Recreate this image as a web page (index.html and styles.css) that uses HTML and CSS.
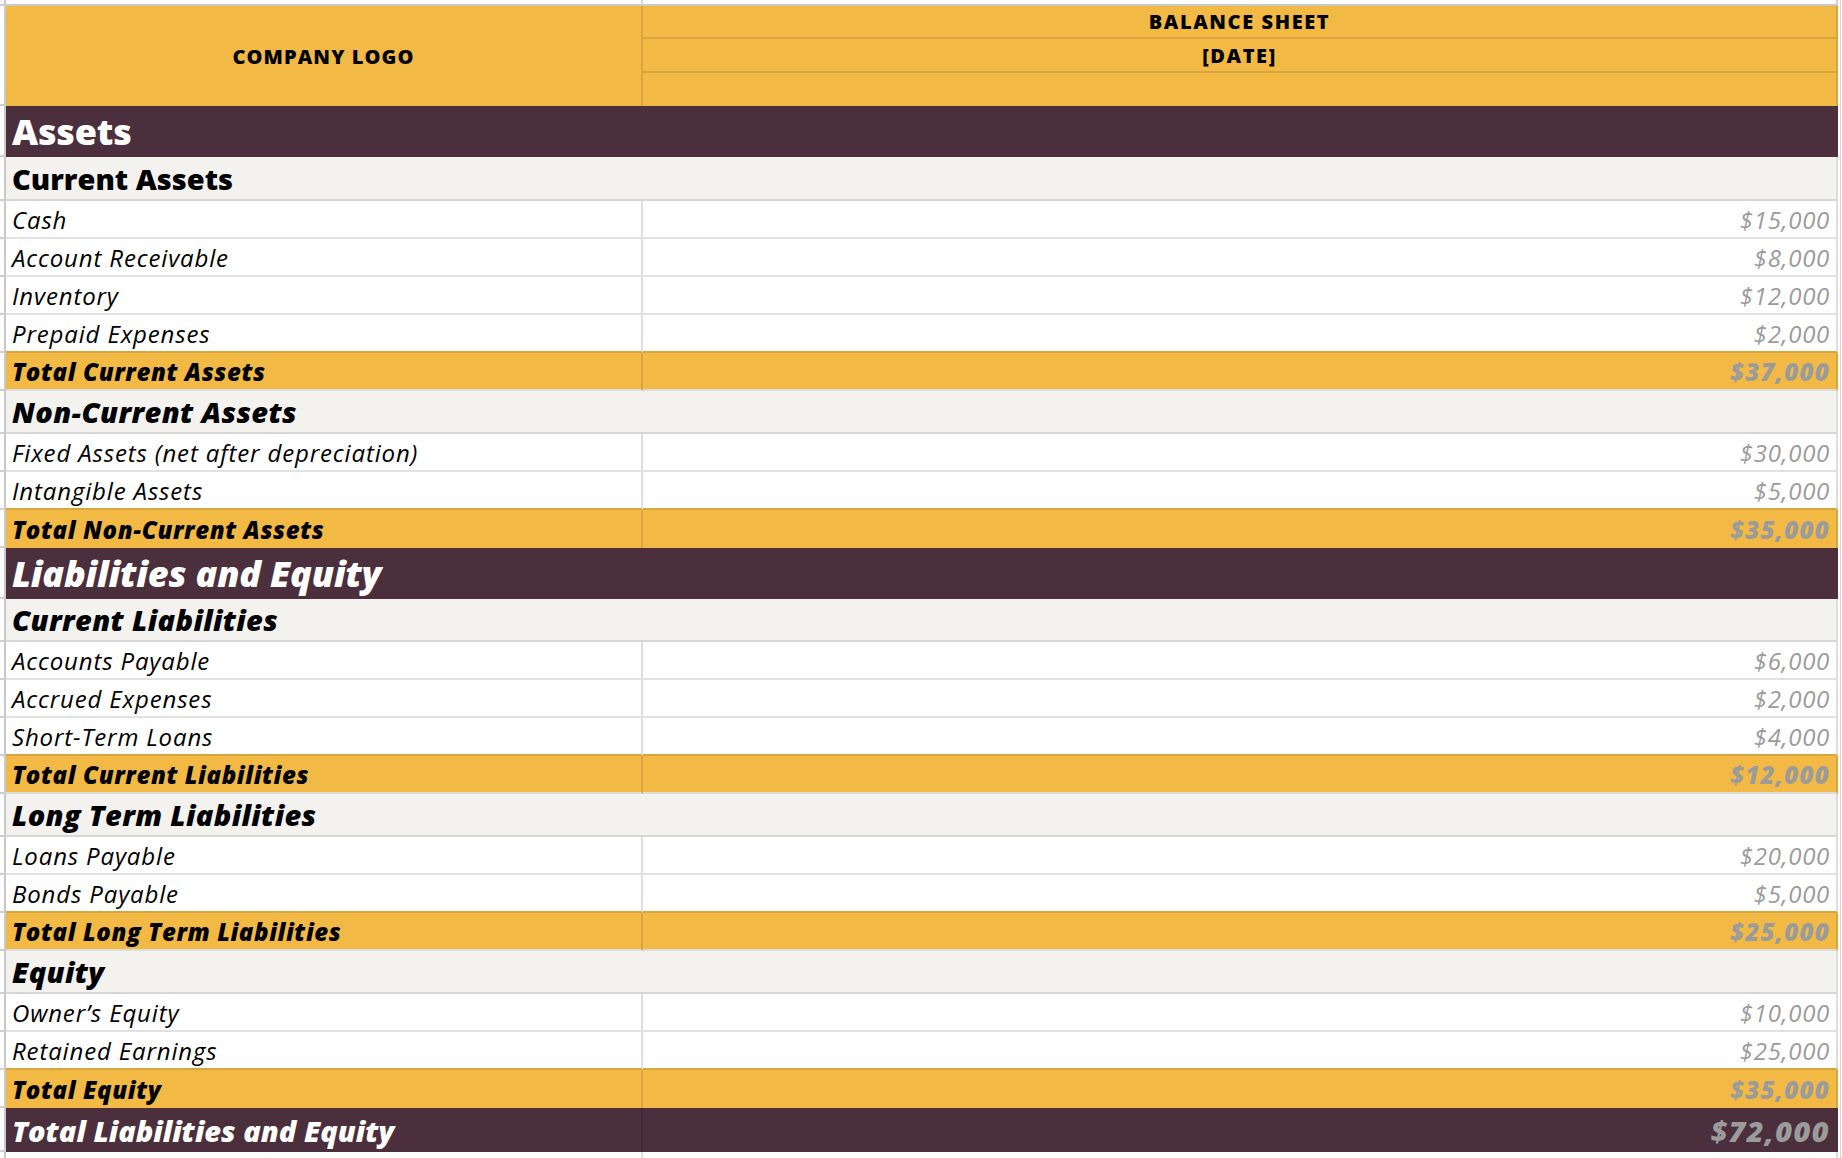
FILE: index.html
```html
<!DOCTYPE html>
<html lang="en">
<head>
<meta charset="utf-8">
<title>Balance Sheet</title>
<link rel="stylesheet" href="styles.css">
</head>
<body>
<div class="sheet">
  <div class="row stub"><div class="g"></div><div class="a"></div><div class="b"></div><div class="rg"></div></div>

  <div class="row head">
    <div class="g"></div>
    <div class="a">COMPANY LOGO</div>
    <div class="b">
      <div class="sub s1">BALANCE SHEET</div>
      <div class="sub s2">[DATE]</div>
      <div class="sub s3"></div>
    </div>
    <div class="rg"></div>
  </div>

  <div class="row title"><div class="g"></div><div class="m">Assets</div><div class="rg"></div></div>
  <div class="row subhead first"><div class="g"></div><div class="m upright">Current Assets</div><div class="rg"></div></div>
  <div class="row data"><div class="g"></div><div class="a">Cash</div><div class="b">$15,000</div><div class="rg"></div></div>
  <div class="row data"><div class="g"></div><div class="a">Account Receivable</div><div class="b">$8,000</div><div class="rg"></div></div>
  <div class="row data"><div class="g"></div><div class="a">Inventory</div><div class="b">$12,000</div><div class="rg"></div></div>
  <div class="row data pre"><div class="g"></div><div class="a">Prepaid Expenses</div><div class="b">$2,000</div><div class="rg"></div></div>
  <div class="row total"><div class="g"></div><div class="a">Total Current Assets</div><div class="b">$37,000</div><div class="rg"></div></div>

  <div class="row subhead"><div class="g"></div><div class="m">Non-Current Assets</div><div class="rg"></div></div>
  <div class="row data"><div class="g"></div><div class="a">Fixed Assets (net after depreciation)</div><div class="b">$30,000</div><div class="rg"></div></div>
  <div class="row data pre"><div class="g"></div><div class="a">Intangible Assets</div><div class="b">$5,000</div><div class="rg"></div></div>
  <div class="row total nob"><div class="g"></div><div class="a">Total Non-Current Assets</div><div class="b">$35,000</div><div class="rg"></div></div>

  <div class="row title"><div class="g"></div><div class="m italic">Liabilities and Equity</div><div class="rg"></div></div>
  <div class="row subhead"><div class="g"></div><div class="m">Current Liabilities</div><div class="rg"></div></div>
  <div class="row data"><div class="g"></div><div class="a">Accounts Payable</div><div class="b">$6,000</div><div class="rg"></div></div>
  <div class="row data"><div class="g"></div><div class="a">Accrued Expenses</div><div class="b">$2,000</div><div class="rg"></div></div>
  <div class="row data pre"><div class="g"></div><div class="a">Short-Term Loans</div><div class="b">$4,000</div><div class="rg"></div></div>
  <div class="row total"><div class="g"></div><div class="a">Total Current Liabilities</div><div class="b">$12,000</div><div class="rg"></div></div>

  <div class="row subhead"><div class="g"></div><div class="m">Long Term Liabilities</div><div class="rg"></div></div>
  <div class="row data"><div class="g"></div><div class="a">Loans Payable</div><div class="b">$20,000</div><div class="rg"></div></div>
  <div class="row data pre"><div class="g"></div><div class="a">Bonds Payable</div><div class="b">$5,000</div><div class="rg"></div></div>
  <div class="row total"><div class="g"></div><div class="a">Total Long Term Liabilities</div><div class="b">$25,000</div><div class="rg"></div></div>

  <div class="row subhead"><div class="g"></div><div class="m">Equity</div><div class="rg"></div></div>
  <div class="row data"><div class="g"></div><div class="a">Owner’s Equity</div><div class="b">$10,000</div><div class="rg"></div></div>
  <div class="row data pre"><div class="g"></div><div class="a">Retained Earnings</div><div class="b">$25,000</div><div class="rg"></div></div>
  <div class="row total nob"><div class="g"></div><div class="a">Total Equity</div><div class="b">$35,000</div><div class="rg"></div></div>

  <div class="row grand"><div class="g"></div><div class="a">Total Liabilities and Equity</div><div class="b">$72,000</div><div class="rg"></div></div>
  <div class="row tail"><div class="g"></div><div class="a"></div><div class="b"></div><div class="rg"></div></div>
</div>
</body>
</html>
```
FILE: styles.css
```css
html, body {
  margin: 0;
  padding: 0;
  background: #ffffff;
}

body {
  font-family: "Open Sans", Lato, "Liberation Sans", sans-serif;
  color: #000;
  overflow: hidden;
}

.sheet {
  width: 1842px;
  display: flex;
  flex-direction: column;
}

.row {
  display: flex;
  flex: none;
}

.row > div {
  box-sizing: border-box;
  flex: none;
}

/* left gutter with grid ticks */
.g {
  width: 6px;
  border-right: 2px solid #c9c9c9;
  border-bottom: 2px solid #cfcfcf;
}

/* right gutter with a faint gridline */
.rg {
  width: 4px;
  background: linear-gradient(90deg, #fff 0, #fff 2px, #d4d4d4 2px, #d4d4d4 3px, #fff 3px);
}

.a {
  width: 637px;
  display: flex;
  align-items: center;
  padding-left: 6px;
  white-space: nowrap;
  border-right: 2px solid #dedede;
  border-bottom: 2px solid #e2e2e2;
}

.b {
  width: 1195px;
  display: flex;
  align-items: center;
  justify-content: flex-end;
  padding-right: 6px;
  white-space: nowrap;
  border-right: 2px solid #dedede;
  border-bottom: 2px solid #e2e2e2;
}

.m {
  width: 1832px;
  display: flex;
  align-items: center;
  padding-left: 6px;
  white-space: nowrap;
}

/* top stub row */
.stub { height: 6px; }
.stub .a, .stub .b { border-bottom-color: #c9c9c9; border-right-color: #d4d4d4; }

/* header */
.head { height: 100px; }
.head .a {
  background: #f2b945;
  justify-content: center;
  padding-left: 0;
  border-right-color: #d9a53e;
  border-bottom: 0;
  font-weight: 800;
  font-size: 20px;
  letter-spacing: 1.1px;
}
.head .b {
  background: #f2b945;
  flex-direction: column;
  align-items: stretch;
  justify-content: flex-start;
  padding-right: 0;
  border-right-color: #d9a53e;
  border-bottom: 0;
}
.sub {
  display: flex;
  align-items: center;
  justify-content: center;
  box-sizing: border-box;
  font-weight: 800;
  font-size: 20px;
  letter-spacing: 1.6px;
}
.s1 { height: 33px; border-bottom: 2px solid #d9a53e; }
.s2 { height: 34px; border-bottom: 2px solid #d9a53e; }
.s3 { height: 33px; }

/* dark section titles */
.title { height: 51px; }
.title .m {
  background: #4b2f3c;
  color: #fff;
  font-weight: 800;
  font-size: 36px;
  letter-spacing: -0.2px;
  border-right: 2px solid #4b2f3c;
}
.title .italic { font-style: italic; }

/* light sub headers */
.subhead { height: 43px; }
.subhead.first { height: 44px; }
.subhead .m {
  background: #f3f2ee;
  font-weight: 800;
  font-style: italic;
  font-size: 29px;
  letter-spacing: 0.35px;
  border-right: 2px solid #dcdcdc;
  border-bottom: 2px solid #d6d6d6;
}
.subhead .upright { font-style: normal; letter-spacing: 0; }

/* data rows */
.data { height: 38px; }
.data .a {
  font-style: italic;
  font-size: 24px;
  letter-spacing: 0.85px;
}
.data .b {
  font-style: italic;
  font-size: 24px;
  letter-spacing: 0.7px;
  color: #9b9b9b;
}
.data.pre .a, .data.pre .b { border-bottom-color: #d9a53e; }

/* total rows */
.total { height: 38px; }
.total .a, .total .b {
  background: #f2b945;
  font-style: italic;
  font-weight: 800;
  font-size: 24px;
  letter-spacing: 0.6px;
  border-right-color: #d9a53e;
  border-bottom-color: #dcdcdc;
}
.total .b { color: #9b9b9b; letter-spacing: 1.3px; }
.total.nob .a, .total.nob .b { border-bottom: 0; }

/* grand total */
.grand { height: 44px; }
.grand .a, .grand .b {
  background: #4b2f3c;
  font-style: italic;
  font-weight: 800;
  font-size: 29px;
  letter-spacing: 0;
  border-right-color: #43283a;
  border-bottom: 0;
}
.grand .a { color: #fff; }
.grand .b { color: #9b9b9b; letter-spacing: 1.4px; border-right-color: #4b2f3c; }

.tail { height: 12px; }
.tail .a, .tail .b { border-bottom: 0; }
```
